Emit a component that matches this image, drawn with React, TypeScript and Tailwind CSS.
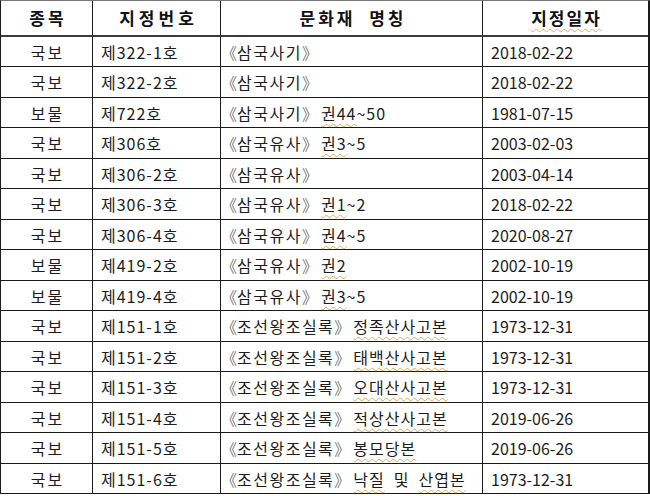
import React from "react";

type Row = { kind: string; no: string; title: string; extra?: React.ReactNode; date: string };

const W = ({ children }: { children: React.ReactNode }) => (
  <span className="underline decoration-wavy decoration-[#dcae5a] decoration-1 underline-offset-[3px]">{children}</span>
);

const kw = (a: string, b: string) => (
  <>
    <W>{a}</W>
    {b}
  </>
);

const rows: Row[] = [
  { kind: "국보", no: "제322-1호", title: "삼국사기", date: "2018-02-22" },
  { kind: "국보", no: "제322-2호", title: "삼국사기", date: "2018-02-22" },
  { kind: "보물", no: "제722호", title: "삼국사기", extra: kw("권44", "~50"), date: "1981-07-15" },
  { kind: "국보", no: "제306호", title: "삼국유사", extra: kw("권3", "~5"), date: "2003-02-03" },
  { kind: "국보", no: "제306-2호", title: "삼국유사", date: "2003-04-14" },
  { kind: "국보", no: "제306-3호", title: "삼국유사", extra: kw("권1", "~2"), date: "2018-02-22" },
  { kind: "국보", no: "제306-4호", title: "삼국유사", extra: kw("권4", "~5"), date: "2020-08-27" },
  { kind: "보물", no: "제419-2호", title: "삼국유사", extra: kw("권2", ""), date: "2002-10-19" },
  { kind: "보물", no: "제419-4호", title: "삼국유사", extra: kw("권3", "~5"), date: "2002-10-19" },
  { kind: "국보", no: "제151-1호", title: "조선왕조실록", extra: <W>정족산사고본</W>, date: "1973-12-31" },
  { kind: "국보", no: "제151-2호", title: "조선왕조실록", extra: <W>태백산사고본</W>, date: "1973-12-31" },
  { kind: "국보", no: "제151-3호", title: "조선왕조실록", extra: <W>오대산사고본</W>, date: "1973-12-31" },
  { kind: "국보", no: "제151-4호", title: "조선왕조실록", extra: <W>적상산사고본</W>, date: "2019-06-26" },
  { kind: "국보", no: "제151-5호", title: "조선왕조실록", extra: <W>봉모당본</W>, date: "2019-06-26" },
  {
    kind: "국보",
    no: "제151-6호",
    title: "조선왕조실록",
    extra: (
      <>
        <W>낙질</W>
        <span className="inline-block w-[9px]" />및<span className="inline-block w-[9px]" />
        <W>산엽본</W>
      </>
    ),
    date: "1973-12-31",
  },
];

const heights = ["h-[30px]", "h-[31px]"];

export default function App() {
  return (
    <div
      className="w-[650px] h-[496px] bg-white text-[#1c1c1c] text-[16px]"
      style={{ fontFamily: '"Noto Sans CJK KR", "Noto Sans", sans-serif' }}
    >
      <div className="w-[650px] border-t border-t-[#777] border-l border-l-[#1a1a1a] border-r-2 border-r-[#1a1a1a]">
        <div className="flex h-[36px] border-b-2 border-[#3a3a3a] font-bold text-[#111] text-[17px]">
          <div className="w-[92px] border-r border-[#1a1a1a] flex items-center justify-center tracking-[3px] pl-[3px]">종목</div>
          <div className="w-[128px] border-r border-[#1a1a1a] flex items-center justify-center tracking-[4px] pl-[4px]">지정번호</div>
          <div className="w-[262px] border-r border-[#1a1a1a] flex items-center justify-center tracking-[3px] pl-[3px]">문화재&nbsp;&nbsp;명칭</div>
          <div className="flex-1 flex items-center justify-center tracking-[2px] pl-[2px]">
            <W>지정일자</W>
          </div>
        </div>
        {rows.map((r, i) => (
          <div key={i} className={`flex border-b border-[#1a1a1a] ${heights[i % 2]}`}>
            <div className="w-[92px] border-r border-[#1a1a1a] flex items-center justify-center tracking-[2px] pl-[2px]">{r.kind}</div>
            <div className="w-[128px] border-r border-[#1a1a1a] flex items-center pl-[8px] tracking-[1px]">{r.no}</div>
            <div className="w-[262px] border-r border-[#1a1a1a] flex items-center whitespace-nowrap">
              <span className="text-[#7a7a7a]">《</span>
              <span className="tracking-[1.5px]">{r.title}</span>
              <span className="text-[#7a7a7a]">》</span>
              {r.extra && <span className="ml-[3px] tracking-[1px]">{r.extra}</span>}
            </div>
            <div className="flex-1 flex items-center pl-[8px]">{r.date}</div>
          </div>
        ))}
      </div>
    </div>
  );
}
